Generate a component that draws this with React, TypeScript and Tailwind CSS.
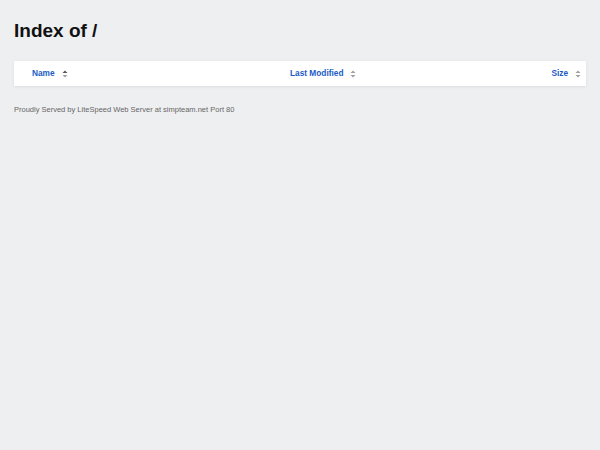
const SortIcon = ({ active }: { active?: boolean }) => (
  <svg width="6" height="8" viewBox="0 0 6 8" className="ml-[7px] shrink-0">
    <path d="M3 0.5 L5.5 3 L0.5 3 Z" fill={active ? '#555' : '#a0a0a0'} />
    <path d="M3 7.5 L5.5 5 L0.5 5 Z" fill="#a0a0a0" />
  </svg>
);

export default function App() {
  return (
    <div className="min-h-[450px] w-full bg-[#eeeff1] px-[14px] pt-[20px] font-['Liberation_Sans',Arial,sans-serif]">
      <h1 className="text-[19px] font-bold text-[#111] leading-[22px]">Index of /</h1>
      <div className="mt-[19px] flex h-[25px] items-center bg-white text-[8.3px] font-bold text-[#1a5bc4] shadow-[0_1px_3px_rgba(0,0,0,0.08)]">
        <div className="flex w-[276px] items-center pl-[18px]">
          Name<SortIcon active />
        </div>
        <div className="flex flex-1 items-center">
          Last Modified<SortIcon />
        </div>
        <div className="flex items-center pr-[5px]">
          Size<SortIcon />
        </div>
      </div>
      <p className="mt-[18px] text-[7.5px] text-[#666]">
        Proudly Served by LiteSpeed Web Server at simpteam.net Port 80
      </p>
    </div>
  );
}
